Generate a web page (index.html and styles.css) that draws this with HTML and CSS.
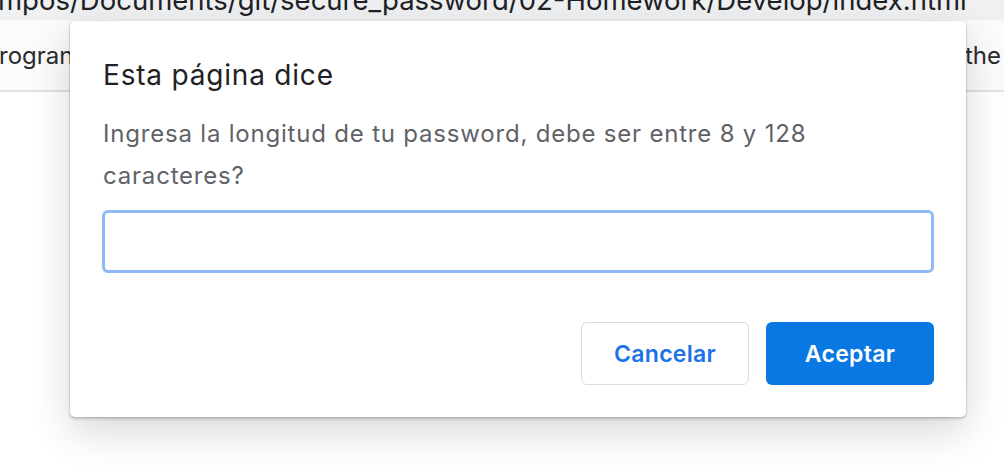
FILE: index.html
```html
<!DOCTYPE html>
<html lang="es">
<head>
<meta charset="utf-8">
<title>Esta página dice</title>
<link rel="stylesheet" href="styles.css">
</head>
<body>
<div class="urlbar"><span class="url">mpos/Documents/git/secure_password/02-Homework/Develop/index.html</span></div>
<div class="tabrow">
  <span class="tab-left">rogran</span>
  <span class="tab-right">the</span>
</div>
<div class="page"></div>
<div class="dialog" role="dialog">
  <h1 class="title">Esta página dice</h1>
  <p class="message">Ingresa la longitud de tu password, debe ser entre 8 y 128<br>caracteres?</p>
  <input class="field" type="text" aria-label="respuesta">
  <div class="actions">
    <button class="btn btn-cancel">Cancelar</button>
    <button class="btn btn-ok">Aceptar</button>
  </div>
</div>
</body>
</html>
```
FILE: styles.css
```css
html, body {
  margin: 0;
  padding: 0;
  height: 100%;
  background: #ffffff;
  font-family: Inter, "Noto Sans", sans-serif;
  overflow: hidden;
}
.urlbar {
  height: 20px;
  background: #eef0f2;
  overflow: hidden;
}
.url {
  display: block;
  font-size: 27.5px;
  line-height: 28px;
  margin-top: -14px;
  margin-left: -2px;
  color: #202124;
  white-space: nowrap;
}
.tabrow {
  height: 72px;
  box-sizing: border-box;
  padding-top: 21px;
  border-bottom: 2px solid #e0e2e5;
  background: #fbfbfb;
  display: flex;
  justify-content: space-between;
  align-items: flex-start;
  font-size: 24px;
  line-height: 30px;
  color: #2a2b2e;
  overflow: hidden;
  white-space: nowrap;
}
.tab-left { margin-left: -1px; }
.tab-right { margin-right: 3px; }
.dialog {
  position: absolute;
  left: 70px;
  top: 21px;
  width: 896px;
  height: 396px;
  box-sizing: border-box;
  background: #ffffff;
  border-radius: 5px;
  box-shadow: 0 0 0 1px rgba(0,0,0,0.06), 0 2px 3px rgba(0,0,0,0.18), 0 14px 40px rgba(0,0,0,0.16);
  padding: 37px 32px 32px 33px;
  display: flex;
  flex-direction: column;
}
.title {
  margin: 0;
  font-size: 28px;
  font-weight: 400;
  line-height: 34px;
  letter-spacing: 0.8px;
  color: #202124;
}
.message {
  margin: 21px 0 0;
  font-size: 24px;
  line-height: 42px;
  letter-spacing: 0.8px;
  color: #5f6368;
}
.field {
  margin: 13px 0 0 -1px;
  height: 63px;
  min-height: 63px;
  flex: 0 0 63px;
  box-sizing: border-box;
  border: 3px solid #8ebbf5;
  border-radius: 6px;
  outline: none;
  background: #fff;
}
.actions {
  margin-top: 49px;
  display: flex;
  justify-content: flex-end;
  gap: 17px;
}
.btn {
  height: 63px;
  width: 168px;
  box-sizing: border-box;
  border-radius: 6px;
  font-family: inherit;
  font-size: 23px;
  font-weight: 600;
  letter-spacing: 0.3px;
}
.btn-cancel {
  background: #fff;
  border: 1.5px solid #dadce0;
  color: #1a73e8;
}
.btn-ok {
  background: #0a78e2;
  border: none;
  color: #ffffff;
}
```
